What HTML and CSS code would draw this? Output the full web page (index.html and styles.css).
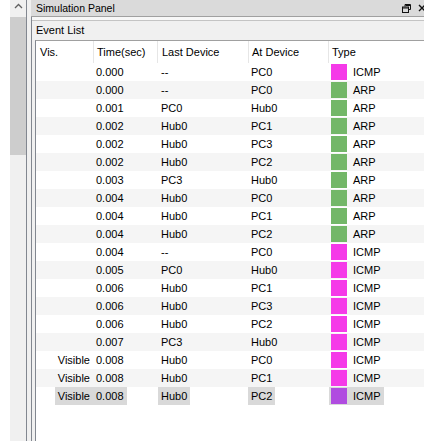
FILE: index.html
```html
<!DOCTYPE html>
<html>
<head>
<meta charset="utf-8">
<link rel="stylesheet" href="styles.css">
</head>
<body>
<div class="gutter"></div>
<div class="scrollbar">
  <div class="sb-btn"><svg width="9" height="6" viewBox="0 0 9 6"><path d="M1 5 L4.5 1.5 L8 5" fill="none" stroke="#606060" stroke-width="1.3"/></svg></div>
  <div class="sb-thumb"></div>
  <div class="sb-track"></div>
</div>
<div class="frame">
  <div class="dock">
    <div class="titlebar">
      <span class="title">Simulation Panel</span>
      <span class="tb-icons">
        <svg class="ico-restore" width="9" height="9" viewBox="0 0 9 9"><path d="M3 0.5 H8.5 V5.5 H6.5 M3 0.5 V2.5 M3.5 1.5 H8" fill="none" stroke="#111" stroke-width="1"/><rect x="0.5" y="3" width="6" height="5.5" fill="none" stroke="#111" stroke-width="1"/><path d="M1 4 H6" stroke="#111" stroke-width="1"/></svg>
        <svg class="ico-close" width="8" height="8" viewBox="0 0 8 8"><path d="M1 1 L7 7 M7 1 L1 7" stroke="#111" stroke-width="1.4"/></svg>
      </span>
    </div>
    <div class="dock-body">
      <div class="group-top"></div>
      <div class="group-label">Event List</div>
      <div class="table">
        <div class="row head">
          <div class="c vis-h">Vis.</div>
          <div class="c time-h">Time(sec)</div>
          <div class="c last-h">Last Device</div>
          <div class="c at-h">At Device</div>
          <div class="c type-h">Type</div>
        </div>
        <div class="row"><div class="c vis"><span></span></div><div class="c time"><span>0.000</span></div><div class="c last"><span>--</span></div><div class="c at"><span>PC0</span></div><div class="c type"><span><i class="sw icmp"></i>ICMP</span></div></div>
        <div class="row alt"><div class="c vis"><span></span></div><div class="c time"><span>0.000</span></div><div class="c last"><span>--</span></div><div class="c at"><span>PC0</span></div><div class="c type"><span><i class="sw arp"></i>ARP</span></div></div>
        <div class="row"><div class="c vis"><span></span></div><div class="c time"><span>0.001</span></div><div class="c last"><span>PC0</span></div><div class="c at"><span>Hub0</span></div><div class="c type"><span><i class="sw arp"></i>ARP</span></div></div>
        <div class="row alt"><div class="c vis"><span></span></div><div class="c time"><span>0.002</span></div><div class="c last"><span>Hub0</span></div><div class="c at"><span>PC1</span></div><div class="c type"><span><i class="sw arp"></i>ARP</span></div></div>
        <div class="row"><div class="c vis"><span></span></div><div class="c time"><span>0.002</span></div><div class="c last"><span>Hub0</span></div><div class="c at"><span>PC3</span></div><div class="c type"><span><i class="sw arp"></i>ARP</span></div></div>
        <div class="row alt"><div class="c vis"><span></span></div><div class="c time"><span>0.002</span></div><div class="c last"><span>Hub0</span></div><div class="c at"><span>PC2</span></div><div class="c type"><span><i class="sw arp"></i>ARP</span></div></div>
        <div class="row"><div class="c vis"><span></span></div><div class="c time"><span>0.003</span></div><div class="c last"><span>PC3</span></div><div class="c at"><span>Hub0</span></div><div class="c type"><span><i class="sw arp"></i>ARP</span></div></div>
        <div class="row alt"><div class="c vis"><span></span></div><div class="c time"><span>0.004</span></div><div class="c last"><span>Hub0</span></div><div class="c at"><span>PC0</span></div><div class="c type"><span><i class="sw arp"></i>ARP</span></div></div>
        <div class="row"><div class="c vis"><span></span></div><div class="c time"><span>0.004</span></div><div class="c last"><span>Hub0</span></div><div class="c at"><span>PC1</span></div><div class="c type"><span><i class="sw arp"></i>ARP</span></div></div>
        <div class="row alt"><div class="c vis"><span></span></div><div class="c time"><span>0.004</span></div><div class="c last"><span>Hub0</span></div><div class="c at"><span>PC2</span></div><div class="c type"><span><i class="sw arp"></i>ARP</span></div></div>
        <div class="row"><div class="c vis"><span></span></div><div class="c time"><span>0.004</span></div><div class="c last"><span>--</span></div><div class="c at"><span>PC0</span></div><div class="c type"><span><i class="sw icmp"></i>ICMP</span></div></div>
        <div class="row alt"><div class="c vis"><span></span></div><div class="c time"><span>0.005</span></div><div class="c last"><span>PC0</span></div><div class="c at"><span>Hub0</span></div><div class="c type"><span><i class="sw icmp"></i>ICMP</span></div></div>
        <div class="row"><div class="c vis"><span></span></div><div class="c time"><span>0.006</span></div><div class="c last"><span>Hub0</span></div><div class="c at"><span>PC1</span></div><div class="c type"><span><i class="sw icmp"></i>ICMP</span></div></div>
        <div class="row alt"><div class="c vis"><span></span></div><div class="c time"><span>0.006</span></div><div class="c last"><span>Hub0</span></div><div class="c at"><span>PC3</span></div><div class="c type"><span><i class="sw icmp"></i>ICMP</span></div></div>
        <div class="row"><div class="c vis"><span></span></div><div class="c time"><span>0.006</span></div><div class="c last"><span>Hub0</span></div><div class="c at"><span>PC2</span></div><div class="c type"><span><i class="sw icmp"></i>ICMP</span></div></div>
        <div class="row alt"><div class="c vis"><span></span></div><div class="c time"><span>0.007</span></div><div class="c last"><span>PC3</span></div><div class="c at"><span>Hub0</span></div><div class="c type"><span><i class="sw icmp"></i>ICMP</span></div></div>
        <div class="row"><div class="c vis"><span>Visible</span></div><div class="c time"><span>0.008</span></div><div class="c last"><span>Hub0</span></div><div class="c at"><span>PC0</span></div><div class="c type"><span><i class="sw icmp"></i>ICMP</span></div></div>
        <div class="row alt"><div class="c vis"><span>Visible</span></div><div class="c time"><span>0.008</span></div><div class="c last"><span>Hub0</span></div><div class="c at"><span>PC1</span></div><div class="c type"><span><i class="sw icmp"></i>ICMP</span></div></div>
        <div class="row sel"><div class="c vis"><span>Visible</span></div><div class="c time"><span>0.008</span></div><div class="c last"><span>Hub0</span></div><div class="c at"><span>PC2</span></div><div class="c type"><span><i class="sw icmp-sel"></i>ICMP</span></div></div>
      </div>
    </div>
  </div>
</div>
</body>
</html>
```
FILE: styles.css
```css
html, body {
  margin: 0;
  padding: 0;
}
body {
  width: 424px;
  height: 441px;
  overflow: hidden;
  display: flex;
  background: #fff;
  font-family: "Liberation Sans", Arial, sans-serif;
  font-size: 11px;
  color: #000;
}
.gutter {
  width: 10px;
  background: #fff;
}
.scrollbar {
  width: 16px;
  display: flex;
  flex-direction: column;
  background: #f0f0f0;
}
.sb-btn {
  height: 17px;
  display: flex;
  justify-content: center;
  padding-top: 3px;
  box-sizing: border-box;
}
.sb-thumb {
  height: 138px;
  background: #cdcdcd;
}
.sb-track {
  flex: 1;
}
.frame {
  flex: 1;
  border-left: 1px solid #828790;
  background: #f0f0f0;
  padding-left: 4px;
  display: flex;
  min-width: 0;
}
.dock {
  flex: 1;
  display: flex;
  flex-direction: column;
  min-width: 0;
}
.titlebar {
  height: 16px;
  background: #dadada;
  border-bottom: 1px solid #a0a0a0;
  display: flex;
  align-items: center;
  justify-content: space-between;
  padding-left: 5px;
  white-space: nowrap;
}
.title {
  font-size: 10.5px;
  line-height: 16px;
}
.tb-icons {
  display: flex;
  align-items: center;
  gap: 7px;
  margin-right: -2px;
}
.tb-icons svg {
  display: block;
}
.dock-body {
  flex: 1;
  border-left: 1px solid #828790;
  padding-left: 3px;
  display: flex;
  flex-direction: column;
  min-height: 0;
}
.group-top {
  height: 3px;
  background: #f7f7f7;
  border-bottom: 1px solid #c4c4c4;
  margin-left: -3px;
}
.group-label {
  height: 19px;
  line-height: 19px;
  padding-left: 1px;
  white-space: nowrap;
}
.table {
  flex: 1;
  background: #fff;
  border-left: 1px solid #828790;
  border-top: 1px solid #a0a0a0;
}
.row {
  display: grid;
  grid-template-columns: 57px 64px 91px 80px 1fr;
  height: 18px;
  line-height: 18px;
  white-space: nowrap;
}
.row.alt {
  background: #f5f5f5;
}
.row.head {
  height: 22px;
  line-height: 22px;
  background: #fff;
}
.head .c {
  border-left: 1px solid #e6e6e6;
}
.head .vis-h {
  border-left: none;
  padding-left: 4px;
}
.head .time-h { padding-left: 3px; }
.head .last-h { padding-left: 4px; }
.head .at-h { padding-left: 3px; }
.head .type-h { padding-left: 3px; }
.c {
  overflow: hidden;
}
.c span {
  display: inline-block;
  padding: 0 3px;
  height: 18px;
}
.vis {
  text-align: right;
}
.last span, .type span {
  margin-left: 1px;
}
.type span {
  padding-left: 2px;
  display: inline-flex;
  align-items: center;
}
.sw {
  display: inline-block;
  width: 16px;
  height: 16px;
  margin-right: 6px;
}
.sw.icmp { background: #f53ae8; }
.sw.arp { background: #73b768; }
.sw.icmp-sel { background: #b04ce0; }
.sel .c span:not(:empty) {
  background: #d9d9d9;
}
```
